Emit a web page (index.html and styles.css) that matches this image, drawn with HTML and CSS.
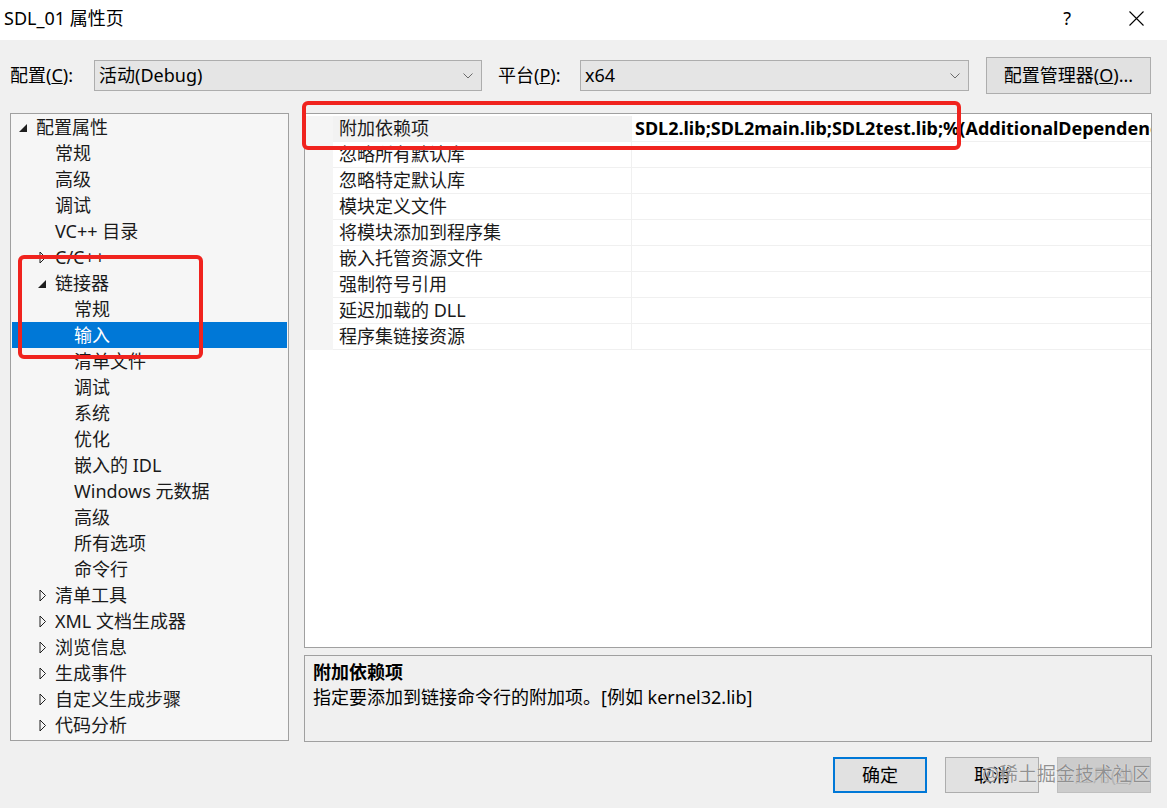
FILE: index.html
```html
<!DOCTYPE html>
<html lang="zh-CN">
<head>
<meta charset="utf-8">
<title>SDL_01 属性页</title>
<link rel="stylesheet" href="styles.css">
</head>
<body>
<div class="dialog">
  <header class="titlebar">
    <span class="title">SDL_01 属性页</span>
    <span class="help">?</span>
    <svg class="close" width="15" height="15" viewBox="0 0 15 15"><path d="M0.5 0.5 L14.5 14.5 M14.5 0.5 L0.5 14.5" stroke="#000" stroke-width="1.1" fill="none"/></svg>
  </header>

  <div class="toolbar">
    <span class="lbl lbl-config">配置(<u>C</u>):</span>
    <div class="combo combo-config"><span class="combo-text">活动(Debug)</span><svg class="chev" width="10" height="6" viewBox="0 0 10 6"><path d="M0.5 0.5 L5 5 L9.5 0.5" fill="none" stroke="#6a6a6a"/></svg></div>
    <span class="lbl lbl-platform">平台(<u>P</u>):</span>
    <div class="combo combo-platform"><span class="combo-text">x64</span><svg class="chev" width="10" height="6" viewBox="0 0 10 6"><path d="M0.5 0.5 L5 5 L9.5 0.5" fill="none" stroke="#6a6a6a"/></svg></div>
    <button class="btn btn-manager">配置管理器(<u>O</u>)...</button>
  </div>

  <div class="main">
    <div class="tree">
      <div class="row l0"><span class="ex"><svg width="10" height="10" viewBox="0 0 10 10"><path d="M9 1 L9 9 L1 9 Z" fill="#1e1e1e"/></svg></span><span>配置属性</span></div>
      <div class="row l1"><span class="ex"></span><span>常规</span></div>
      <div class="row l1"><span class="ex"></span><span>高级</span></div>
      <div class="row l1"><span class="ex"></span><span>调试</span></div>
      <div class="row l1"><span class="ex"></span><span>VC++ 目录</span></div>
      <div class="row l1"><span class="ex"><svg class="col" width="8" height="13" viewBox="0 0 8 13"><path d="M1 1 L1 12 L6.5 6.5 Z" fill="none" stroke="#1e1e1e"/></svg></span><span>C/C++</span></div>
      <div class="row l1"><span class="ex"><svg width="10" height="10" viewBox="0 0 10 10"><path d="M9 1 L9 9 L1 9 Z" fill="#1e1e1e"/></svg></span><span>链接器</span></div>
      <div class="row l2"><span class="ex"></span><span>常规</span></div>
      <div class="row l2 selected"><span class="ex"></span><span>输入</span></div>
      <div class="row l2"><span class="ex"></span><span>清单文件</span></div>
      <div class="row l2"><span class="ex"></span><span>调试</span></div>
      <div class="row l2"><span class="ex"></span><span>系统</span></div>
      <div class="row l2"><span class="ex"></span><span>优化</span></div>
      <div class="row l2"><span class="ex"></span><span>嵌入的 IDL</span></div>
      <div class="row l2"><span class="ex"></span><span>Windows 元数据</span></div>
      <div class="row l2"><span class="ex"></span><span>高级</span></div>
      <div class="row l2"><span class="ex"></span><span>所有选项</span></div>
      <div class="row l2"><span class="ex"></span><span>命令行</span></div>
      <div class="row l1"><span class="ex"><svg class="col" width="8" height="13" viewBox="0 0 8 13"><path d="M1 1 L1 12 L6.5 6.5 Z" fill="none" stroke="#1e1e1e"/></svg></span><span>清单工具</span></div>
      <div class="row l1"><span class="ex"><svg class="col" width="8" height="13" viewBox="0 0 8 13"><path d="M1 1 L1 12 L6.5 6.5 Z" fill="none" stroke="#1e1e1e"/></svg></span><span>XML 文档生成器</span></div>
      <div class="row l1"><span class="ex"><svg class="col" width="8" height="13" viewBox="0 0 8 13"><path d="M1 1 L1 12 L6.5 6.5 Z" fill="none" stroke="#1e1e1e"/></svg></span><span>浏览信息</span></div>
      <div class="row l1"><span class="ex"><svg class="col" width="8" height="13" viewBox="0 0 8 13"><path d="M1 1 L1 12 L6.5 6.5 Z" fill="none" stroke="#1e1e1e"/></svg></span><span>生成事件</span></div>
      <div class="row l1"><span class="ex"><svg class="col" width="8" height="13" viewBox="0 0 8 13"><path d="M1 1 L1 12 L6.5 6.5 Z" fill="none" stroke="#1e1e1e"/></svg></span><span>自定义生成步骤</span></div>
      <div class="row l1"><span class="ex"><svg class="col" width="8" height="13" viewBox="0 0 8 13"><path d="M1 1 L1 12 L6.5 6.5 Z" fill="none" stroke="#1e1e1e"/></svg></span><span>代码分析</span></div>
    </div>

    <div class="right">
      <div class="grid">
        <div class="prow active"><span class="gutter"></span><span class="pname">附加依赖项</span><span class="pval">SDL2.lib;SDL2main.lib;SDL2test.lib;%(AdditionalDependencies)</span></div>
        <div class="prow"><span class="gutter"></span><span class="pname">忽略所有默认库</span><span class="pval"></span></div>
        <div class="prow"><span class="gutter"></span><span class="pname">忽略特定默认库</span><span class="pval"></span></div>
        <div class="prow"><span class="gutter"></span><span class="pname">模块定义文件</span><span class="pval"></span></div>
        <div class="prow"><span class="gutter"></span><span class="pname">将模块添加到程序集</span><span class="pval"></span></div>
        <div class="prow"><span class="gutter"></span><span class="pname">嵌入托管资源文件</span><span class="pval"></span></div>
        <div class="prow"><span class="gutter"></span><span class="pname">强制符号引用</span><span class="pval"></span></div>
        <div class="prow"><span class="gutter"></span><span class="pname">延迟加载的 DLL</span><span class="pval"></span></div>
        <div class="prow"><span class="gutter"></span><span class="pname">程序集链接资源</span><span class="pval"></span></div>
      </div>
      <div class="desc">
        <div class="desc-title">附加依赖项</div>
        <div class="desc-text">指定要添加到链接命令行的附加项。[例如 kernel32.lib]</div>
      </div>
    </div>
  </div>

  <div class="footer">
    <button class="btn btn-ok">确定</button>
    <button class="btn btn-cancel">取消</button>
    <button class="btn btn-apply">应用(<u>A</u>)</button>
  </div>

  <div class="annot annot-grid"></div>
  <div class="annot annot-tree"></div>
  <div class="watermark">@稀土掘金技术社区</div>
</div>
</body>
</html>
```

FILE: styles.css
```css
* { box-sizing: border-box; }

html, body {
  margin: 0;
  padding: 0;
}

body {
  background: #f0f0f0;
  font-family: "Noto Sans", "Noto Sans CJK SC", sans-serif;
  font-size: 18px;
  color: #1a1a1a;
}

.dialog {
  position: relative;
  width: 1167px;
  height: 808px;
  overflow: hidden;
}

/* title bar */
.titlebar {
  height: 40px;
  background: #ffffff;
  display: flex;
  align-items: center;
  padding-left: 4px;
}
.title {
  flex: 1;
  line-height: 26px;
  margin-top: -4px;
  color: #000;
}
.help {
  line-height: 26px;
  margin-top: -4px;
  margin-right: 58px;
  color: #000;
}
.close {
  margin-right: 23px;
  margin-top: -4px;
}

/* toolbar */
.toolbar {
  height: 38px;
  margin-top: 16px;
  display: flex;
  align-items: center;
  padding-left: 10px;
}
.lbl {
  line-height: 26px;
  color: #000;
}
.lbl-config { width: 84px; }
.lbl-platform { width: 82px; margin-left: 16px; }
.combo {
  height: 31px;
  border: 1px solid #adadad;
  background: #e5e5e5;
  display: flex;
  align-items: center;
  padding: 0 8px 0 4px;
}
.combo-text {
  flex: 1;
  line-height: 26px;
  color: #000;
}
.chev { margin-top: 1px; }
.combo-config { width: 388px; }
.combo-platform { width: 389px; }

.btn {
  font-family: inherit;
  font-size: 18px;
  color: #000;
  background: #e1e1e1;
  border: 1px solid #adadad;
  padding: 0;
  line-height: 26px;
}
.btn-manager {
  width: 165px;
  height: 37px;
  margin-left: 17px;
}

/* main */
.main {
  margin-top: 19px;
  height: 629px;
  display: flex;
  align-items: flex-start;
  padding-left: 10px;
  gap: 15px;
}

.tree {
  width: 279px;
  height: 628px;
  border: 1px solid #a0a0a0;
  background: #f6f6f6;
  padding: 0 1px;
}
.row {
  height: 26px;
  display: flex;
  align-items: center;
  line-height: 26px;
  white-space: nowrap;
  color: #1a1a1a;
}
.row.l0 { padding-left: 5px; }
.row.l1 { padding-left: 24px; }
.row.l2 { padding-left: 43px; }
.ex {
  width: 19px;
  height: 26px;
  display: flex;
  align-items: center;
  padding-left: 1px;
  padding-top: 2px;
}
.ex .col { margin-left: 2px; margin-top: -1px; }
.row.selected {
  background: #0078d7;
  color: #ffffff;
}

.right {
  width: 848px;
  display: flex;
  flex-direction: column;
  gap: 7px;
}

.grid {
  height: 535px;
  border: 1px solid #a0a0a0;
  background: #ffffff;
  padding-top: 2px;
  overflow: hidden;
}
.prow {
  height: 26px;
  display: grid;
  grid-template-columns: 28px 299px 1fr;
  line-height: 25px;
}
.gutter { background: #f5f5f5; }
.pname {
  padding-left: 6px;
  border-bottom: 1px solid #f0f0f0;
  border-right: 1px solid #f0f0f0;
  color: #1a1a1a;
  white-space: nowrap;
}
.pval {
  padding-left: 3px;
  border-bottom: 1px solid #f0f0f0;
  white-space: nowrap;
  overflow: hidden;
  font-weight: 700;
  color: #000;
}
.prow.active .pname { background: #f2f2f2; }

.desc {
  height: 87px;
  border: 1px solid #a0a0a0;
  background: #f0f0f0;
  padding: 3px 8px 0 8px;
}
.desc-title {
  font-weight: 700;
  line-height: 26px;
  color: #000;
}
.desc-text {
  line-height: 25px;
  color: #000;
}

/* footer */
.footer {
  margin-top: 15px;
  display: flex;
  justify-content: flex-end;
  gap: 18px;
  padding-right: 16px;
}
.footer .btn {
  width: 94px;
  height: 36px;
}
.btn-ok {
  border: 2px solid #0078d7;
}
.btn-apply {
  background: #cccccc;
  border-color: #bfbfbf;
  color: #b4b4b4;
}

/* annotations drawn on top of the screenshot */
.annot {
  position: absolute;
  border: 4px solid #f0231e;
  border-radius: 6px;
}
.annot-grid {
  left: 302px;
  top: 101px;
  width: 659px;
  height: 49px;
}
.annot-tree {
  left: 18px;
  top: 255px;
  width: 185px;
  height: 104px;
}

.watermark {
  position: absolute;
  left: 982px;
  top: 761px;
  font-size: 19px;
  line-height: 26px;
  color: rgba(110, 110, 110, 0.75);
  text-shadow: 0 0 1px #ffffff;
  white-space: nowrap;
  pointer-events: none;
}
```
